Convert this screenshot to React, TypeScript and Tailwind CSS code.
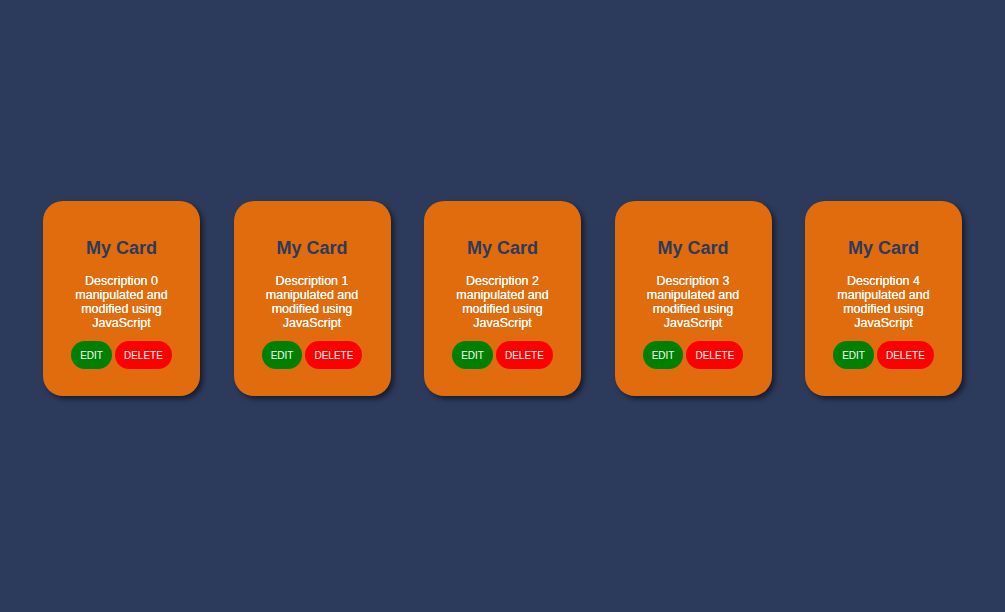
const cards = [0, 1, 2, 3, 4];

export default function App() {
  return (
    <div className="flex min-h-screen justify-center gap-[33.5px] bg-[#2c3a5c] pt-[201px] font-['Liberation_Sans',Arial,sans-serif]">
      {cards.map((i) => (
        <Card key={i} index={i} />
      ))}
    </div>
  );
}

function Card({ index }: { index: number }) {
  return (
    <div className="flex h-[195px] w-[157px] flex-col items-center rounded-[20px] bg-[#e06c0e] px-[20px] pt-[37px] text-center shadow-[3px_3px_5px_rgba(0,0,0,0.5)]">
      <h2 className="text-[18px] font-bold leading-[21px] text-[#2c3a5c]">My Card</h2>
      <p className="mt-[15px] text-[12.5px] leading-[14px] text-white [text-shadow:0_0_0.4px_#fff]">
        Description {index} manipulated and modified using JavaScript
      </p>
      <div className="mt-[11px] flex gap-[3px]">
        <button className="h-[28px] rounded-full bg-[#008000] px-[9px] text-[10px] text-white">EDIT</button>
        <button className="h-[28px] rounded-full bg-[#ff0000] px-[9px] text-[10px] text-white">DELETE</button>
      </div>
    </div>
  );
}
